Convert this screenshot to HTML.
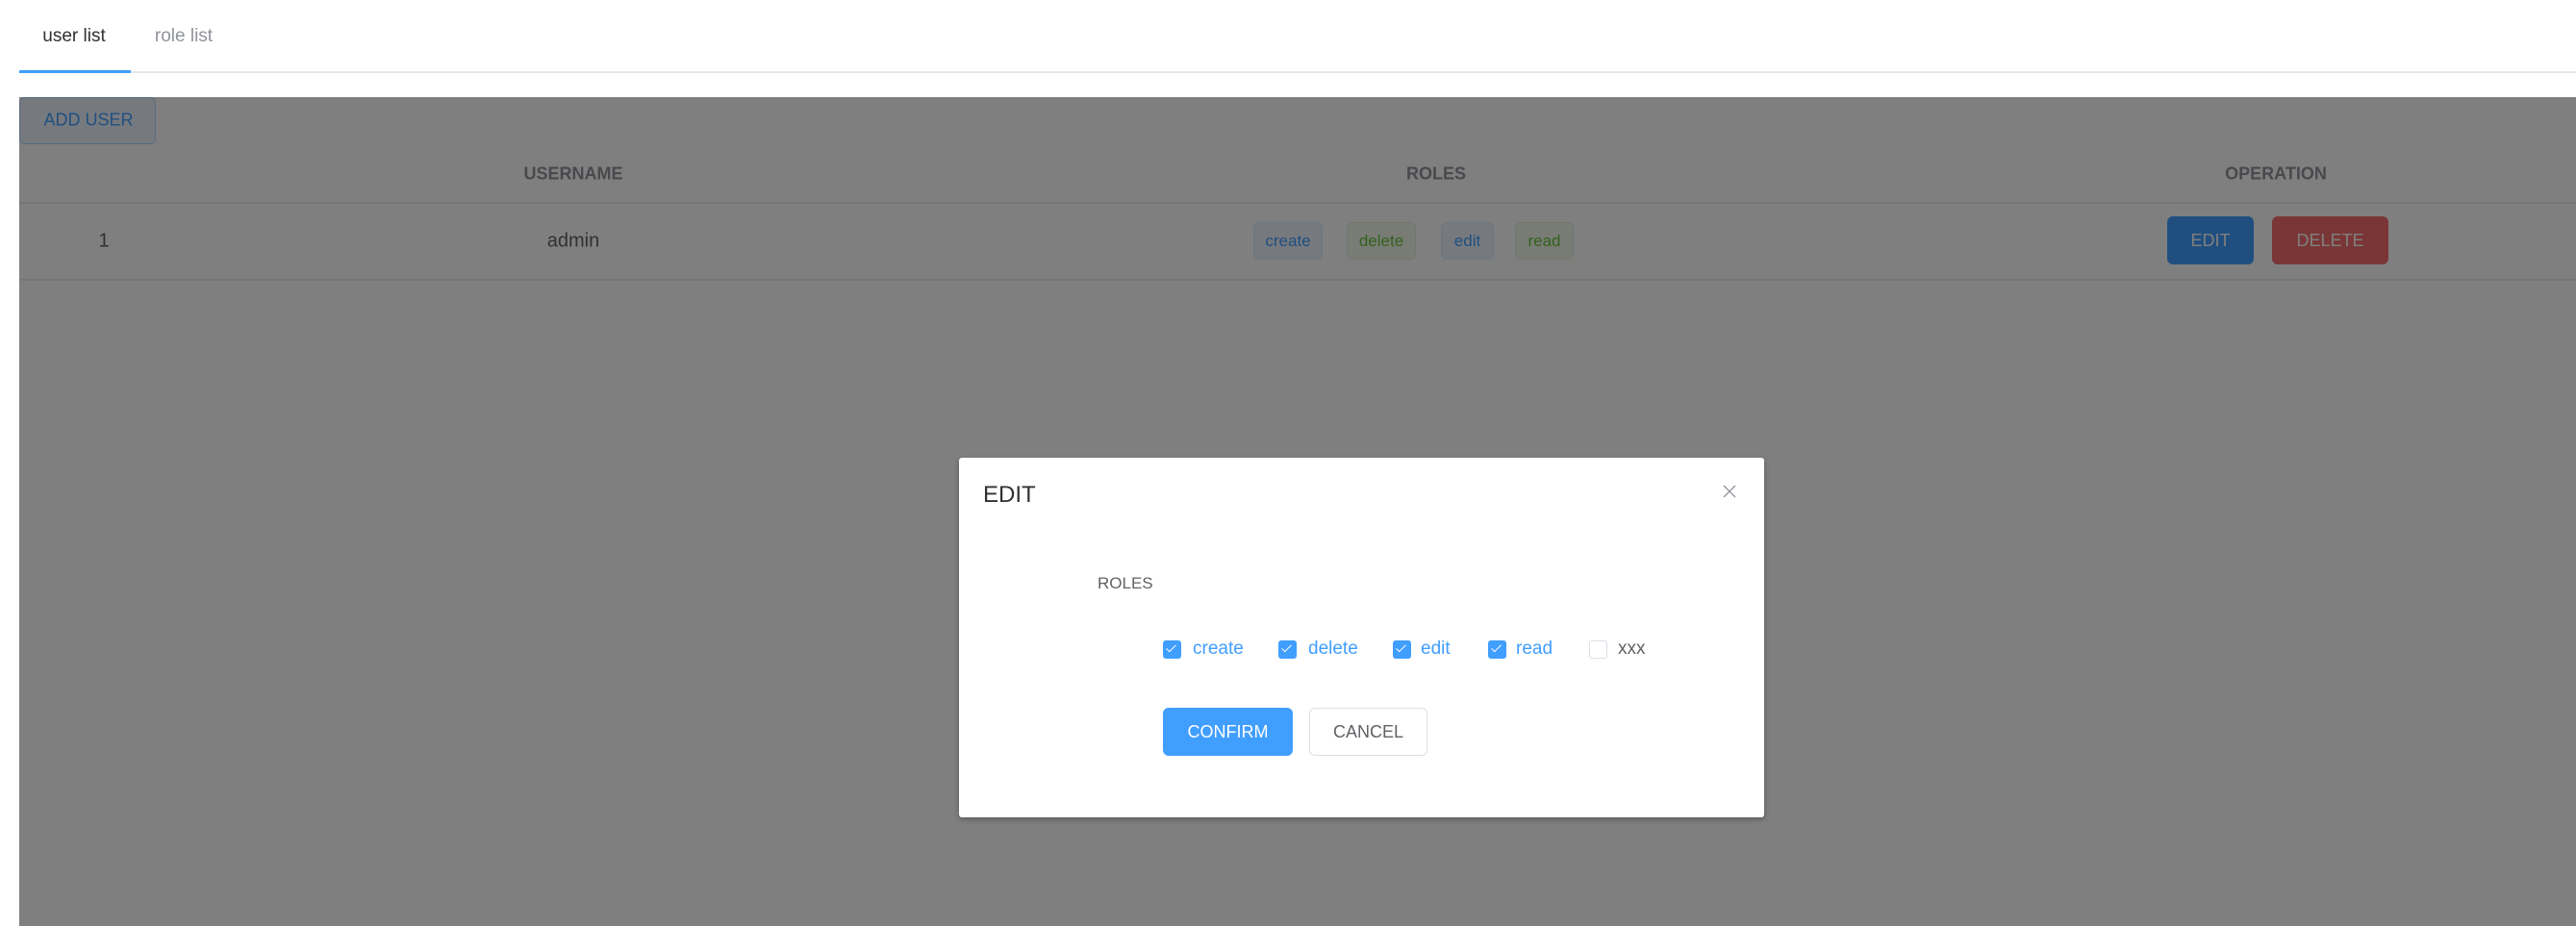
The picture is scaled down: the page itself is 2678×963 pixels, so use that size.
<!DOCTYPE html>
<html><head><style>
*{margin:0;padding:0;box-sizing:border-box}
body{width:2678px;height:963px;overflow:hidden;background:#fff;font-family:"Liberation Sans",sans-serif;position:relative;color:#606266}
.abs{position:absolute}
.c{transform:translate(-50%,-50%);white-space:nowrap}
.tag{position:absolute;top:231px;height:39px;border-radius:6px;font-size:17px;line-height:37px;text-align:center;border:1px solid}
.tb{background:#ecf5ff;border-color:#d9ecff;color:#409eff}
.tg{background:#f0f9eb;border-color:#e1f3d8;color:#67c23a}
.btn{position:absolute;border-radius:6px;font-size:18px;text-align:center;color:#fff}
.cb{position:absolute;top:666px;width:19px;height:19px;border-radius:3px;background:#409eff}
.cb:after{content:"";position:absolute;left:6px;top:2px;width:4px;height:9px;border:solid #fff;border-width:0 1px 1px 0;transform:rotate(45deg)}
.lbl{position:absolute;top:675px;transform:translateY(-50%);font-size:19px;color:#409eff}
</style></head><body>
<div class="abs c" style="left:77px;top:38px;font-size:19px;color:#303133">user list</div>
<div class="abs c" style="left:191px;top:38px;font-size:19px;color:#909399">role list</div>
<div class="abs" style="left:20px;top:74px;width:2658px;height:2px;background:#e4e7ed"></div>
<div class="abs" style="left:20px;top:73px;width:116px;height:3px;background:#409eff"></div>

<div class="abs" style="left:20px;top:101px;width:142px;height:49px;background:#ecf5ff;border:1px solid #b3d8ff;border-radius:6px"></div>
<div class="abs c" style="left:92px;top:125px;font-size:18px;color:#409eff">ADD USER</div>

<div class="abs c" style="left:596px;top:181px;font-size:18px;font-weight:bold;color:#909399">USERNAME</div>
<div class="abs c" style="left:1493px;top:181px;font-size:18px;font-weight:bold;color:#909399">ROLES</div>
<div class="abs c" style="left:2366px;top:181px;font-size:18px;font-weight:bold;color:#909399">OPERATION</div>
<div class="abs" style="left:20px;top:210px;width:2658px;height:2px;background:#ebeef5"></div>
<div class="abs c" style="left:108px;top:251px;font-size:20px">1</div>
<div class="abs c" style="left:596px;top:251px;font-size:20px">admin</div>
<div class="tag tb" style="left:1303px;width:72px">create</div>
<div class="tag tg" style="left:1400px;width:72px">delete</div>
<div class="tag tb" style="left:1498px;width:55px">edit</div>
<div class="tag tg" style="left:1575px;width:61px">read</div>
<div class="btn" style="left:2253px;top:225px;width:90px;height:50px;line-height:50px;background:#409eff">EDIT</div>
<div class="btn" style="left:2362px;top:225px;width:121px;height:50px;line-height:50px;background:#f56c6c">DELETE</div>
<div class="abs" style="left:20px;top:290px;width:2658px;height:2px;background:#ebeef5"></div>

<div class="abs" style="left:20px;top:101px;width:2658px;height:862px;background:rgba(0,0,0,.5)"></div>

<div class="abs" style="left:997px;top:476px;width:837px;height:374px;background:#fff;border-radius:3px;box-shadow:0 2px 6px rgba(0,0,0,.3)"></div>
<div class="abs" style="left:1022px;top:515px;transform:translateY(-50%);font-size:24px;color:#303133">EDIT</div>
<svg class="abs" style="left:1791px;top:504px" width="14" height="14" viewBox="0 0 14 14"><path d="M1 1L13 13M13 1L1 13" stroke="#909399" stroke-width="1.3"/></svg>
<div class="abs" style="left:1141px;top:607px;transform:translateY(-50%);font-size:17px;color:#606266">ROLES</div>
<div class="cb" style="left:1209px"></div><div class="lbl" style="left:1240px">create</div>
<div class="cb" style="left:1329px"></div><div class="lbl" style="left:1360px">delete</div>
<div class="cb" style="left:1448px"></div><div class="lbl" style="left:1477px">edit</div>
<div class="cb" style="left:1547px"></div><div class="lbl" style="left:1576px">read</div>
<div class="abs" style="left:1652px;top:666px;width:19px;height:19px;border:1px solid #dcdfe6;border-radius:3px"></div>
<div class="lbl" style="left:1682px;color:#606266">xxx</div>
<div class="btn" style="left:1209px;top:736px;width:135px;height:50px;line-height:50px;background:#409eff">CONFIRM</div>
<div class="btn" style="left:1361px;top:736px;width:123px;height:50px;line-height:48px;background:#fff;border:1px solid #dcdfe6;color:#606266">CANCEL</div>
</body></html>
